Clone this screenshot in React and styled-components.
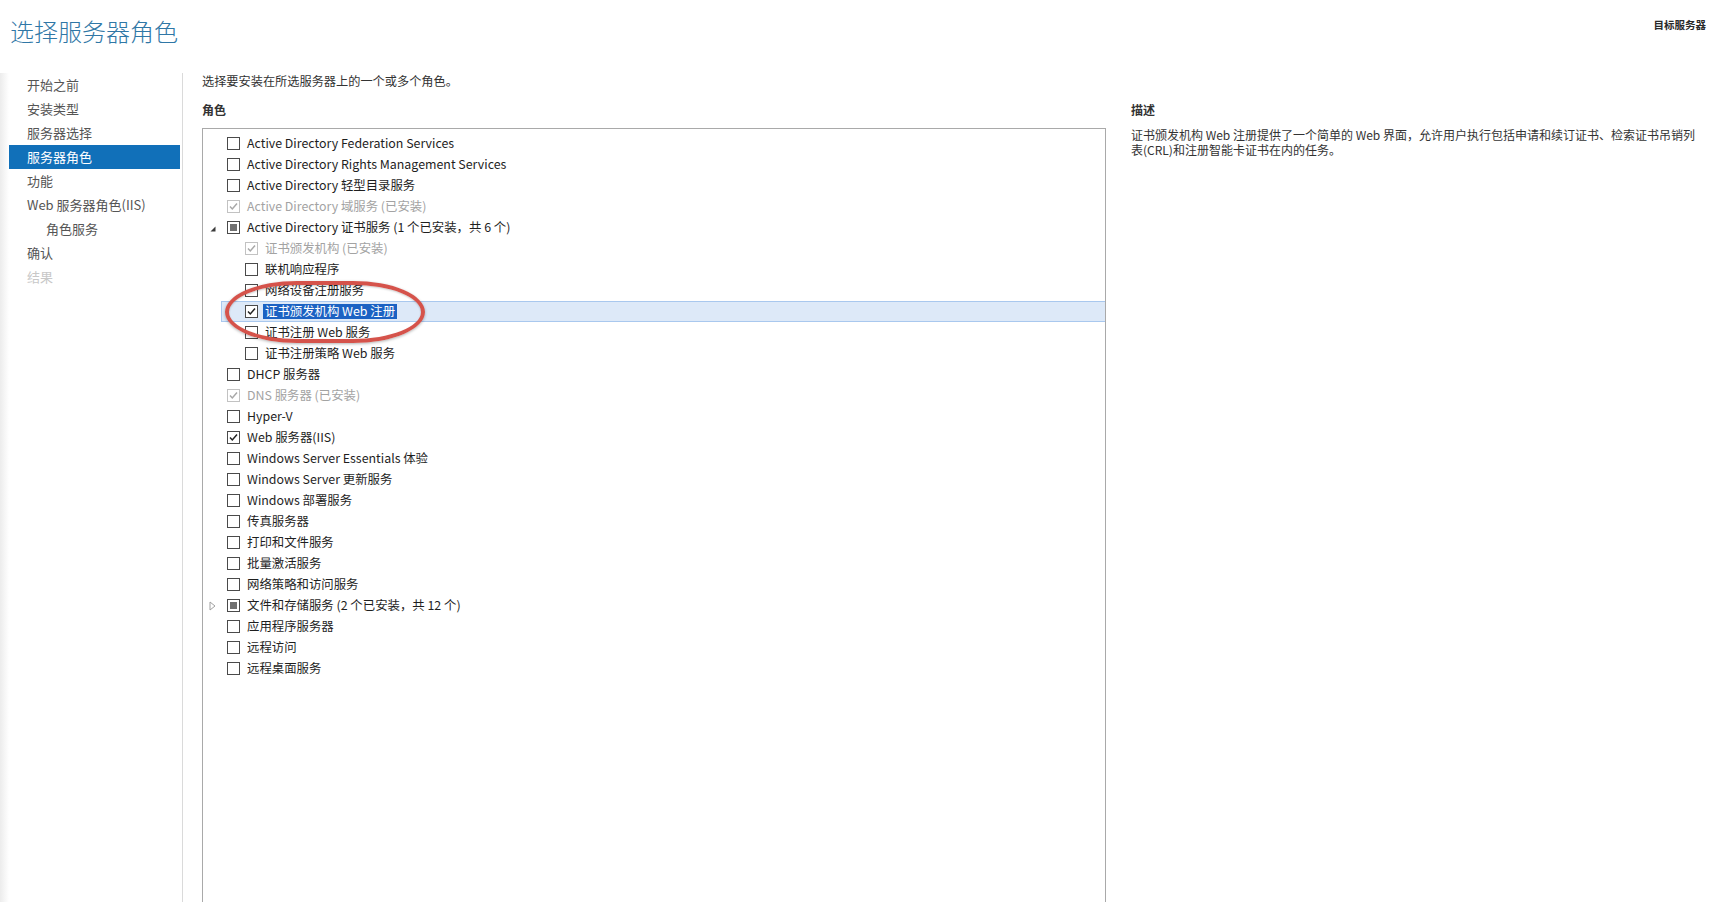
import React from 'react';
import styled, { createGlobalStyle } from 'styled-components';

// roles shown in the tree, top to bottom
const roles = [
  { label: 'Active Directory Federation Services' },
  { label: 'Active Directory Rights Management Services' },
  { label: 'Active Directory 轻型目录服务' },
  { label: 'Active Directory 域服务 (已安装)', state: 'checked', disabled: true },
  { label: 'Active Directory 证书服务 (1 个已安装，共 6 个)', state: 'mixed', expander: 'open' },
  { label: '证书颁发机构 (已安装)', level: 1, state: 'checked', disabled: true },
  { label: '联机响应程序', level: 1 },
  { label: '网络设备注册服务', level: 1 },
  { label: '证书颁发机构 Web 注册', level: 1, state: 'checked', selected: true },
  { label: '证书注册 Web 服务', level: 1 },
  { label: '证书注册策略 Web 服务', level: 1 },
  { label: 'DHCP 服务器' },
  { label: 'DNS 服务器 (已安装)', state: 'checked', disabled: true },
  { label: 'Hyper-V' },
  { label: 'Web 服务器(IIS)', state: 'checked' },
  { label: 'Windows Server Essentials 体验' },
  { label: 'Windows Server 更新服务' },
  { label: 'Windows 部署服务' },
  { label: '传真服务器' },
  { label: '打印和文件服务' },
  { label: '批量激活服务' },
  { label: '网络策略和访问服务' },
  { label: '文件和存储服务 (2 个已安装，共 12 个)', state: 'mixed', expander: 'closed' },
  { label: '应用程序服务器' },
  { label: '远程访问' },
  { label: '远程桌面服务' },
];

const steps = [
  { label: '开始之前' },
  { label: '安装类型' },
  { label: '服务器选择' },
  { label: '服务器角色', active: true },
  { label: '功能' },
  { label: 'Web 服务器角色(IIS)' },
  { label: '角色服务', sub: true },
  { label: '确认' },
  { label: '结果', disabled: true },
];

const Expander = ({ kind }) => {
  if (kind === 'open') {
    return (
      <svg width="6" height="6" viewBox="0 0 6 6" style={{ marginTop: 3 }}>
        <path d="M5.5 0.5 L5.5 5.5 L0.5 5.5 Z" fill="#3a3a3a" />
      </svg>
    );
  }
  if (kind === 'closed') {
    return (
      <svg width="7" height="10" viewBox="0 0 7 10">
        <path d="M1 1 L6 5 L1 9 Z" fill="none" stroke="#a0a0a0" strokeWidth="1" />
      </svg>
    );
  }
  return null;
};

const Check = ({ state, disabled }) => (
  <Box $disabled={disabled}>
    {state === 'checked' && (
      <svg width="11" height="11" viewBox="0 0 11 11">
        <path d="M2 5.6 L4.3 8 L9 2.6" fill="none" stroke={disabled ? '#a8a8a8' : '#222'} strokeWidth="1.5" />
      </svg>
    )}
    {state === 'mixed' && <Mixed />}
  </Box>
);

const App = () => {
  return (
    <Page>
      <GlobalStyle />
      <Header>
        <Title>选择服务器角色</Title>
        <Target>目标服务器</Target>
      </Header>
      <Body>
        <Nav>
          {steps.map((s) => (
            <NavItem key={s.label} $active={s.active} $sub={s.sub} $disabled={s.disabled}>
              {s.label}
            </NavItem>
          ))}
        </Nav>
        <Main>
          <Intro>选择要安装在所选服务器上的一个或多个角色。</Intro>
          <Columns>
            <RolesColumn>
              <Heading>角色</Heading>
              <ListBox>
                {roles.map((r) => (
                  <Row key={r.label} $level={r.level || 0} $selected={r.selected}>
                    <ExpanderCell>
                      <Expander kind={r.expander} />
                    </ExpanderCell>
                    <Check state={r.state} disabled={r.disabled} />
                    <Label $disabled={r.disabled} $selected={r.selected}>{r.label}</Label>
                  </Row>
                ))}
                <Circle />
              </ListBox>
            </RolesColumn>
            <DescColumn>
              <Heading>描述</Heading>
              <DescText>
                证书颁发机构 Web 注册提供了一个简单的 Web 界面，允许用户执行包括申请和续订证书、检索证书吊销列表(CRL)和注册智能卡证书在内的任务。
              </DescText>
            </DescColumn>
          </Columns>
        </Main>
      </Body>
    </Page>
  );
};

export default App;

const GlobalStyle = createGlobalStyle`
  html, body {
    margin: 0;
    padding: 0;
    height: 100%;
    overflow: hidden;
    background: #fff;
  }
  body {
    font-family: "Noto Sans CJK SC", "Noto Sans", sans-serif;
  }
  * { box-sizing: border-box; }
`;

const Page = styled.div`
  height: 100vh;
  display: flex;
  flex-direction: column;
  overflow: hidden;
`;

const Header = styled.header`
  display: flex;
  justify-content: space-between;
  align-items: flex-start;
  height: 73px;
  padding: 14px 22px 0 10px;
`;

const Title = styled.h1`
  margin: 0;
  font-size: 24px;
  font-weight: 300;
  line-height: 34px;
  color: #2f77a6;
`;

const Target = styled.div`
  margin-top: 3px;
  font-size: 10.5px;
  font-weight: bold;
  line-height: 16px;
  color: #2a2a2a;
`;

const Body = styled.div`
  flex: 1;
  display: flex;
  min-height: 0;
  background: linear-gradient(to right, #ececec 0, #ffffff 9px);
`;

const Nav = styled.nav`
  width: 174px;
  margin-left: 9px;
  padding: 0 2px 0 0;
  border-right: 1px solid #dadada;
  background: #fff;
`;

const NavItem = styled.div`
  height: 24px;
  line-height: 24px;
  padding-left: ${(p) => (p.$sub ? '37px' : '18px')};
  font-size: 13px;
  color: ${(p) => (p.$active ? '#fff' : p.$disabled ? '#c8c8c8' : '#555')};
  background: ${(p) => (p.$active ? '#1170b9' : 'transparent')};
  white-space: nowrap;
`;

const Main = styled.main`
  flex: 1;
  display: flex;
  flex-direction: column;
  min-width: 0;
  padding-left: 19px;
  background: #fff;
`;

const Intro = styled.div`
  font-size: 12.2px;
  line-height: 16px;
  color: #333;
`;

const Columns = styled.div`
  flex: 1;
  display: flex;
  gap: 25px;
  margin-top: 13px;
  min-height: 0;
`;

const RolesColumn = styled.section`
  width: 904px;
  display: flex;
  flex-direction: column;
`;

const DescColumn = styled.section`
  width: 570px;
`;

const Heading = styled.div`
  font-size: 12px;
  font-weight: bold;
  line-height: 16px;
  color: #333;
  margin-bottom: 10px;
`;

const ListBox = styled.div`
  flex: 1;
  position: relative;
  border: 1px solid #a9a9a9;
  border-bottom: none;
  padding-top: 4px;
`;

const Row = styled.div`
  display: flex;
  align-items: center;
  height: 21px;
  margin-left: ${(p) => p.$level * 18}px;
  background: ${(p) => (p.$selected ? '#dde9f8' : 'transparent')};
  border: 1px solid ${(p) => (p.$selected ? '#a9c8ee' : 'transparent')};
  border-right: none;
`;

const ExpanderCell = styled.div`
  width: 17px;
  display: flex;
  justify-content: center;
  align-items: center;
`;

const Box = styled.span`
  width: 13px;
  height: 13px;
  margin-left: 6px;
  display: flex;
  align-items: center;
  justify-content: center;
  border: 1px solid ${(p) => (p.$disabled ? '#c2c2c2' : '#4a4a4a')};
  background: #fff;
  flex-shrink: 0;
`;

const Mixed = styled.span`
  width: 7px;
  height: 7px;
  background: #707070;
`;

const Label = styled.span`
  margin-left: ${(p) => (p.$selected ? '5px' : '7px')};
  padding: 0 ${(p) => (p.$selected ? '2px' : '0')};
  font-size: 12.4px;
  line-height: 15px;
  white-space: nowrap;
  color: ${(p) => (p.$selected ? '#fff' : p.$disabled ? '#a3a3a3' : '#1e1e1e')};
  background: ${(p) => (p.$selected ? '#1b62c3' : 'transparent')};
`;

const Circle = styled.div`
  position: absolute;
  left: 22px;
  top: 152px;
  width: 200px;
  height: 62px;
  border: 4px solid #d5534b;
  border-radius: 72px / 31px;
  box-shadow: 0 1px 3px rgba(0, 0, 0, 0.3), inset 0 1px 2px rgba(0, 0, 0, 0.2);
  pointer-events: none;
`;

const DescText = styled.div`
  font-size: 12px;
  line-height: 14.5px;
  color: #333;
`;
